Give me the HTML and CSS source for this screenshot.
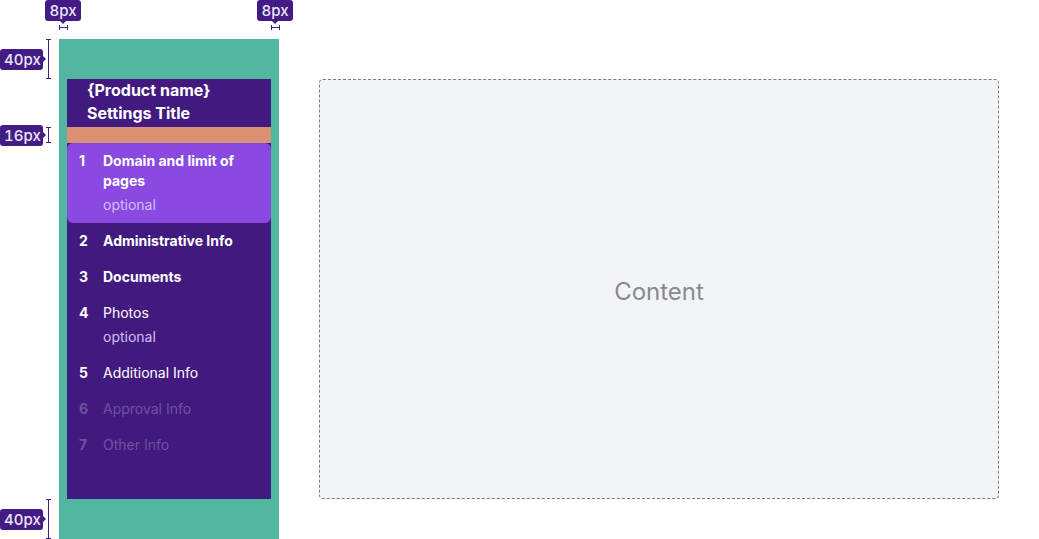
FILE: index.html
```html
<!DOCTYPE html>
<html lang="en">
<head>
<meta charset="utf-8">
<title>Settings layout</title>
<link rel="stylesheet" href="styles.css">
</head>
<body>
<div class="frame">
  <aside class="rail">
    <nav class="panel">
      <header class="panel-head">
        <div>{Product name}</div>
        <div>Settings Title</div>
      </header>
      <div class="gap-band"></div>
      <ol class="steps">
        <li class="step active bold"><span class="num">1</span><div class="body"><span class="label">Domain and limit of pages</span><span class="sub">optional</span></div></li>
        <li class="step bold"><span class="num">2</span><div class="body"><span class="label">Administrative Info</span></div></li>
        <li class="step bold"><span class="num">3</span><div class="body"><span class="label">Documents</span></div></li>
        <li class="step"><span class="num">4</span><div class="body"><span class="label">Photos</span><span class="sub">optional</span></div></li>
        <li class="step"><span class="num">5</span><div class="body"><span class="label">Additional Info</span></div></li>
        <li class="step disabled"><span class="num">6</span><div class="body"><span class="label">Approval Info</span></div></li>
        <li class="step disabled"><span class="num">7</span><div class="body"><span class="label">Other Info</span></div></li>
      </ol>
    </nav>
  </aside>
  <main class="stage">
    <div class="content">Content</div>
  </main>
</div>

<div class="note note-top note-l"><span class="badge badge-down">8px</span><span class="hbar"></span></div>
<div class="note note-top note-r"><span class="badge badge-down">8px</span><span class="hbar"></span></div>
<div class="note note-side note-t40"><span class="badge badge-right">40px</span><span class="vbar"></span></div>
<div class="note note-side note-16"><span class="badge badge-right">16px</span><span class="vbar"></span></div>
<div class="note note-side note-b40"><span class="badge badge-right">40px</span><span class="vbar"></span></div>
</body>
</html>
```
FILE: styles.css
```css
* { box-sizing: border-box; }

html, body {
  margin: 0;
  padding: 0;
  background: #ffffff;
  overflow: hidden;
  font-family: Inter, "Noto Sans", sans-serif;
}

body {
  width: 1039px;
  height: 539px;
  position: relative;
}

.frame {
  display: flex;
  margin: 39px 0 0 59px;
  height: 500px;
}

.rail {
  width: 220px;
  flex: none;
  background: #53b6a1;
  padding: 40px 8px;
  display: flex;
  flex-direction: column;
}

.panel {
  flex: 1;
  background: #421a7f;
  display: flex;
  flex-direction: column;
}

.panel-head {
  height: 48px;
  padding-left: 20px;
  color: #ffffff;
  font-size: 16px;
  font-weight: 700;
  line-height: 23px;
}

.gap-band {
  height: 16px;
  background: #d99374;
}

.steps {
  list-style: none;
  margin: 0;
  padding: 0;
}

.step {
  display: flex;
  padding: 8px 12px;
  color: #ffffff;
  font-size: 14px;
  line-height: 20px;
}

.step.active {
  background: #8a4ae2;
  border-radius: 6px;
}

.num {
  width: 24px;
  flex: none;
  font-weight: 700;
}

.body {
  display: flex;
  flex-direction: column;
  gap: 4px;
  min-width: 0;
}

.label { font-weight: 400; }
.bold .label { font-weight: 700; }

.sub {
  color: #d3bff4;
  font-weight: 400;
}

.step.disabled { color: #6d52a0; }

.stage {
  flex: 1;
  padding: 40px;
}

.content {
  height: 100%;
  border: 1px dashed #7b7b82;
  border-radius: 4px;
  background: #f3f4f8;
  display: flex;
  align-items: center;
  justify-content: center;
  padding-top: 4px;
  color: #888a8f;
  font-size: 24px;
  font-weight: 400;
}

/* spacing annotations (overlay) */
.note {
  position: absolute;
  display: flex;
}

.badge {
  position: relative;
  display: block;
  height: 21px;
  padding: 0 4px;
  background: #431b84;
  color: #ece6f7;
  border-radius: 3px;
  font-family: Inter, "DejaVu Sans", sans-serif;
  font-feature-settings: "tnum" 1;
  font-size: 15px;
  font-weight: 500;
  letter-spacing: 0;
  line-height: 21px;
}

.badge-down::after {
  content: "";
  position: absolute;
  left: 50%;
  bottom: -3px;
  margin-left: -3px;
  border-left: 3px solid transparent;
  border-right: 3px solid transparent;
  border-top: 3px solid #431b84;
}

.badge-right::after {
  content: "";
  position: absolute;
  top: 50%;
  right: -3px;
  margin-top: -3px;
  border-top: 3px solid transparent;
  border-bottom: 3px solid transparent;
  border-left: 3px solid #431b84;
}

.note-top {
  flex-direction: column;
  align-items: center;
  gap: 4px;
  top: 0;
}
.note-l { left: 46px; width: 34px; }
.note-r { left: 258px; width: 34px; }

.hbar {
  position: relative;
  width: 9px;
  height: 5px;
  border-left: 1px solid #431b84;
  border-right: 1px solid #431b84;
}
.hbar::after {
  content: "";
  position: absolute;
  left: 0;
  right: 0;
  top: 2px;
  height: 1px;
  background: #431b84;
}

.note-side {
  left: 0;
  align-items: center;
  gap: 3px;
}
.note-t40 { top: 39px; height: 40px; }
.note-16 { top: 127px; height: 16px; }
.note-b40 { top: 499px; height: 40px; }

.note-side .badge { width: 43px; }

.vbar {
  position: relative;
  align-self: stretch;
  width: 5px;
  border-top: 1px solid #431b84;
  border-bottom: 1px solid #431b84;
}
.vbar::after {
  content: "";
  position: absolute;
  top: 0;
  bottom: 0;
  left: 2px;
  width: 1px;
  background: #431b84;
}
```
